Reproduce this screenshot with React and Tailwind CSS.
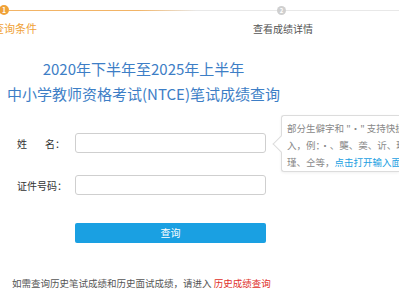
import React from 'react';

export default function App() {
  return (
    <div className="relative w-[399px] h-[300px] overflow-hidden bg-white font-['Noto_Sans_CJK_SC','Noto_Sans',sans-serif]">
      {/* Steps */}
      <div className="h-[40px] pt-[5px]">
        <div className="flex items-center h-[10px]">
          <div className="w-[10px] h-[10px] -ml-[1px] shrink-0 rounded-full bg-[#f0a238] text-white text-[7px] leading-[10px] text-center font-bold">1</div>
          <div className="w-[268px] h-px bg-[linear-gradient(to_right,#f2b466_0%,#f2b466_48%,#e8e8e8_70%)]" />
          <div className="w-[9px] h-[9px] shrink-0 rounded-full bg-[#cfcfcf] text-white text-[6px] leading-[9px] text-center font-bold">2</div>
          <div className="flex-1 h-px bg-[#e8e8e8]" />
        </div>
        <div className="flex mt-[8px] text-[11px] leading-[11px] whitespace-nowrap">
          <span className="-ml-[7px] w-[44px] text-[#f0a238]">查询条件</span>
          <span className="ml-[216px] text-[10px] text-[#555]">查看成绩详情</span>
        </div>
      </div>

      {/* Title */}
      <div className="w-[287px] pt-[16px] text-center text-[15px] leading-[25px] text-[#3d7ec6] whitespace-nowrap">
        <div>2020年下半年至2025年上半年</div>
        <div>中小学教师资格考试(NTCE)笔试成绩查询</div>
      </div>

      {/* Form */}
      <div className="mt-[27px] text-[10px] text-[#333]">
        <div className="flex items-center">
          <label className="w-[75px] pl-[17px] flex">
            <span>姓</span>
            <span className="ml-[18px]">名：</span>
          </label>
          <input className="w-[191px] h-[20px] border border-[#cfcfcf] rounded-[3px] outline-none" />
        </div>
        <div className="flex items-center mt-[22px]">
          <label className="w-[75px] pl-[17px]">证件号码：</label>
          <input className="w-[191px] h-[20px] border border-[#cfcfcf] rounded-[3px] outline-none" />
        </div>
        <button className="ml-[75px] mt-[28px] w-[191px] h-[20px] rounded-[2px] bg-[#1aa0e2] text-white text-[10px] leading-[20px]">查询</button>
      </div>

      <div className="mt-[33px] pl-[12px] text-[9.5px] leading-[14px] text-[#555] whitespace-nowrap">
        如需查询历史笔试成绩和历史面试成绩，请进入 <span className="text-[#e0302a]">历史成绩查询</span>
      </div>

      {/* Tooltip */}
      <div className="absolute left-[281px] top-[115px] w-[118px] h-[57px] rounded-l-[3px] border border-r-0 border-[#dcdcdc] bg-white shadow-[0_1px_3px_rgba(0,0,0,0.06)]">
        <div className="absolute -left-[7px] top-[22px] w-[12px] h-[12px] rotate-45 bg-white border-l border-b border-[#dcdcdc]" />
        <div className="relative pl-[5px] pt-[4px] text-[9.5px] leading-[17px] text-[#888] whitespace-nowrap overflow-hidden">
          <div>部分生僻字和 "·" 支持快捷输</div>
          <div>入，例：·、龑、䶮、䜣、珺、</div>
          <div>瑾、仝等，<span className="text-[#1aa0e2]">点击打开输入面板</span></div>
        </div>
      </div>
    </div>
  );
}
